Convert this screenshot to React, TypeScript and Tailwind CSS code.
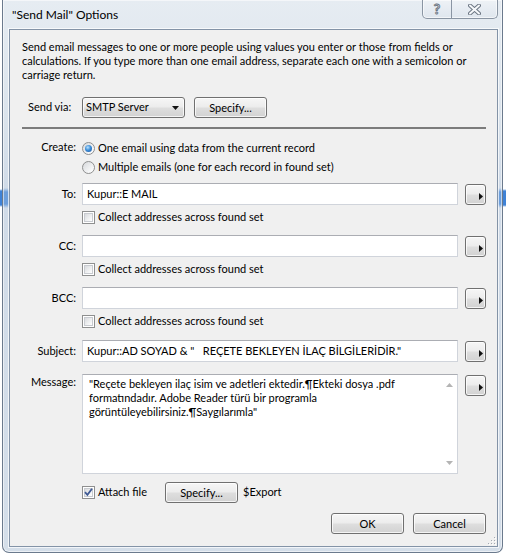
import type { ReactNode } from "react";

const BUTTON_FACE =
  "border border-[#707070] rounded-[3px] bg-[linear-gradient(to_bottom,#f6f6f6_0%,#ececec_48%,#dedede_52%,#d2d2d2_100%)] shadow-[inset_0_0_0_1px_rgba(255,255,255,0.75)]";

function PushButton({ children, className = "" }: { children: ReactNode; className?: string }) {
  return (
    <button
      type="button"
      className={`flex h-[21px] shrink-0 items-center justify-center text-[11px] leading-none text-black ${BUTTON_FACE} ${className}`}
    >
      {children}
    </button>
  );
}

function ArrowButton() {
  return (
    <button
      type="button"
      aria-label="Specify calculation"
      className={`ml-[7px] mt-[1px] flex h-[21px] w-[21px] shrink-0 items-center justify-end pr-[2px] pt-[4px] ${BUTTON_FACE}`}
    >
      <svg width="4" height="7" viewBox="0 0 4 7">
        <path d="M0 0L4 3.5L0 7Z" fill="#111" />
      </svg>
    </button>
  );
}

function TextField({ value = "" }: { value?: string }) {
  return (
    <div className="flex h-[22px] min-w-0 flex-1 items-center overflow-hidden whitespace-pre border border-[#d0d4db] border-t-[#abadb3] bg-white pl-[4px]">
      {value}
    </div>
  );
}

function CheckBox({ checked = false }: { checked?: boolean }) {
  return (
    <span className="flex h-[13px] w-[13px] shrink-0 items-center justify-center border border-[#8e8f8f] bg-white">
      <span className="relative flex h-[9px] w-[9px] items-center justify-center border border-[#c8cbd0] bg-[linear-gradient(135deg,#d9dbde_0%,#f4f5f6_70%,#ffffff_100%)]">
        {checked && (
          <svg className="absolute -left-[1px] -top-[1px]" width="9" height="9" viewBox="0 0 9 9">
            <path d="M1 4.2L3.4 6.8L8 0.8" fill="none" stroke="#3f5a94" strokeWidth="1.8" />
          </svg>
        )}
      </span>
    </span>
  );
}

function Radio({ selected = false }: { selected?: boolean }) {
  return (
    <span className="flex h-[13px] w-[13px] shrink-0 items-center justify-center rounded-full border border-[#8e8f8f] bg-[linear-gradient(135deg,#d6d8db_0%,#f5f6f7_70%,#ffffff_100%)]">
      {selected && (
        <span className="h-[7px] w-[7px] rounded-full bg-[radial-gradient(circle_at_40%_35%,#b9e2ff_0%,#3c8ed8_45%,#1b4f9a_100%)]" />
      )}
    </span>
  );
}

function CheckRow({ label, checked = false, className = "" }: { label: string; checked?: boolean; className?: string }) {
  return (
    <div className={`flex h-[16px] items-center ${className}`}>
      <CheckBox checked={checked} />
      <span className="ml-[3px] whitespace-nowrap">{label}</span>
    </div>
  );
}

function FieldLabel({ children, tall = false }: { children: ReactNode; tall?: boolean }) {
  return (
    <div
      className={`flex w-[60px] shrink-0 justify-end pr-[6px] ${tall ? "h-[16px] items-center" : "h-[23px] items-center"}`}
    >
      {children}
    </div>
  );
}

function AddressBlock({ label, value, className = "" }: { label: string; value?: string; className?: string }) {
  return (
    <div className={`flex ${className}`}>
      <FieldLabel>{label}</FieldLabel>
      <div className="flex min-w-0 flex-1 flex-col">
        <div className="flex items-start">
          <TextField value={value} />
          <ArrowButton />
        </div>
        <CheckRow className="mt-[4px]" label="Collect addresses across found set" />
      </div>
    </div>
  );
}

function SizeGrip() {
  const dots = [
    [6, 0],
    [6, 3],
    [3, 3],
    [6, 6],
    [3, 6],
    [0, 6],
  ];
  return (
    <svg width="8" height="8" viewBox="0 0 8 8">
      {dots.map(([x, y]) => (
        <g key={`${x}-${y}`}>
          <rect x={x + 1} y={y + 1} width="1" height="1" fill="#ffffff" />
          <rect x={x} y={y} width="1" height="1" fill="#a3a9b2" />
        </g>
      ))}
    </svg>
  );
}

export default function App() {
  return (
    <div className="flex h-[557px] w-[506px] overflow-hidden bg-[linear-gradient(to_bottom,#ffffff_189px,#3f82d6_191px,#3f82d6_205px,#ffffff_207px)] pb-[4px] pl-[2px] pr-[3px] font-['Lato',sans-serif] text-[11px] text-black">
      <div className="flex min-w-0 flex-1 flex-col rounded-b-[7px] border border-t-0 border-[#6b7a8d] bg-[linear-gradient(to_bottom,#e6ecf2_0px,#dae3ec_120px,#d0dbe8_188px,#6d9fdc_192px,#6d9fdc_204px,#d0dbe8_208px,#d4dee9_100%)] pb-[5px] pl-[6px] pr-[4px] shadow-[inset_0_0_0_1px_rgba(255,255,255,0.55)]">
        {/* Title bar */}
        <div className="flex h-[29px] shrink-0 items-start justify-between">
          <span className="ml-[3px] mt-[7px] text-[12px] leading-[16px]">"Send Mail" Options</span>
          <div className="flex h-[19px] overflow-hidden rounded-b-[5px] border border-t-0 border-[#8a95a3] bg-[linear-gradient(to_bottom,#eef2f6,#dfe6ee)] shadow-[inset_0_0_0_1px_rgba(255,255,255,0.6)]">
            <div className="flex w-[28px] items-center justify-center">
              <span className="text-[14px] font-bold leading-none text-[#f6f8fa] [-webkit-text-stroke:1px_#6c7683]">?</span>
            </div>
            <div className="flex w-[46px] items-center justify-center border-l border-[#8a95a3]">
              <svg width="13" height="11" viewBox="0 0 13 11">
                <path d="M2 1.5L11 9.5M11 1.5L2 9.5" stroke="#6c7683" strokeWidth="4" strokeLinecap="round" />
                <path d="M2 1.5L11 9.5M11 1.5L2 9.5" stroke="#f6f8fa" strokeWidth="2" strokeLinecap="round" />
              </svg>
            </div>
          </div>
        </div>

        {/* Client area */}
        <div className="flex min-w-0 flex-1 flex-col overflow-hidden border border-[#8393a7] bg-[#f0f0f0] shadow-[0_0_0_1px_rgba(255,255,255,0.7)]">
          <div className="flex min-w-0 flex-1 flex-col pl-[12px] pr-[11px] pt-[10px]">
            <p className="whitespace-nowrap leading-[14px]">
              Send email messages to one or more people using values you enter or those from fields or
              <br />
              calculations. If you type more than one email address, separate each one with a semicolon or
              <br />
              carriage return.
            </p>

            {/* Send via */}
            <div className="mt-[15px] flex h-[21px] items-center">
              <span className="w-[60px] shrink-0 pl-[6px]">Send via:</span>
              <div className={`flex h-[21px] w-[103px] items-center justify-between pl-[3px] pr-[5px] ${BUTTON_FACE}`}>
                <span>SMTP Server</span>
                <svg width="7" height="4" viewBox="0 0 7 4">
                  <path d="M0 0H7L3.5 4Z" fill="#111" />
                </svg>
              </div>
              <PushButton className="ml-[9px] w-[73px]">Specify...</PushButton>
            </div>

            <div className="mt-[9px] h-[2px] bg-[#7c7c7c]" />

            {/* Create */}
            <div className="mt-[10px] flex">
              <FieldLabel tall>Create:</FieldLabel>
              <div className="flex flex-col">
                <div className="flex h-[19px] items-center">
                  <Radio selected />
                  <span className="ml-[3px]">One email using data from the current record</span>
                </div>
                <div className="flex h-[19px] items-center">
                  <Radio />
                  <span className="ml-[3px]">Multiple emails (one for each record in found set)</span>
                </div>
              </div>
            </div>

            <AddressBlock className="mt-[6px]" label="To:" value="Kupur::E MAIL" />
            <AddressBlock className="mt-[10px]" label="CC:" />
            <AddressBlock className="mt-[10px]" label="BCC:" />

            {/* Subject */}
            <div className="mt-[11px] flex items-start">
              <FieldLabel>Subject:</FieldLabel>
              <TextField value={'Kupur::AD SOYAD & "   REÇETE BEKLEYEN İLAÇ BİLGİLERİDİR."'} />
              <ArrowButton />
            </div>

            {/* Message */}
            <div className="mt-[11px] flex items-start">
              <FieldLabel tall>Message:</FieldLabel>
              <div className="flex h-[100px] min-w-0 flex-1 border border-[#d0d4db] border-t-[#abadb3] bg-white">
                <p className="min-w-0 flex-1 whitespace-nowrap pl-[6px] pt-[2px] leading-[14px]">
                  "Reçete bekleyen ilaç isim ve adetleri ektedir.¶Ekteki dosya .pdf
                  <br />
                  formatındadır. Adobe Reader türü bir programla
                  <br />
                  görüntüleyebilirsiniz.¶Saygılarımla"
                </p>
                <div className="flex w-[16px] shrink-0 flex-col items-center justify-between py-[8px]">
                  <svg width="7" height="4" viewBox="0 0 7 4">
                    <path d="M0 4H7L3.5 0Z" fill="#b4b4b4" />
                  </svg>
                  <svg width="7" height="4" viewBox="0 0 7 4">
                    <path d="M0 0H7L3.5 4Z" fill="#b4b4b4" />
                  </svg>
                </div>
              </div>
              <ArrowButton />
            </div>

            {/* Attachment */}
            <div className="mt-[8px] flex h-[21px] items-center">
              <div className="flex w-[143px] shrink-0 items-center pl-[60px]">
                <CheckBox checked />
                <span className="ml-[3px]">Attach file</span>
              </div>
              <PushButton className="w-[73px]">Specify...</PushButton>
              <span className="ml-[5px]">$Export</span>
            </div>

            <div className="mt-[10px] flex justify-end gap-[9px]">
              <PushButton className="w-[73px]">OK</PushButton>
              <PushButton className="w-[73px]">Cancel</PushButton>
            </div>
          </div>
          <div className="mb-[1px] flex h-[8px] justify-end pr-[1px]">
            <SizeGrip />
          </div>
        </div>
      </div>
    </div>
  );
}
